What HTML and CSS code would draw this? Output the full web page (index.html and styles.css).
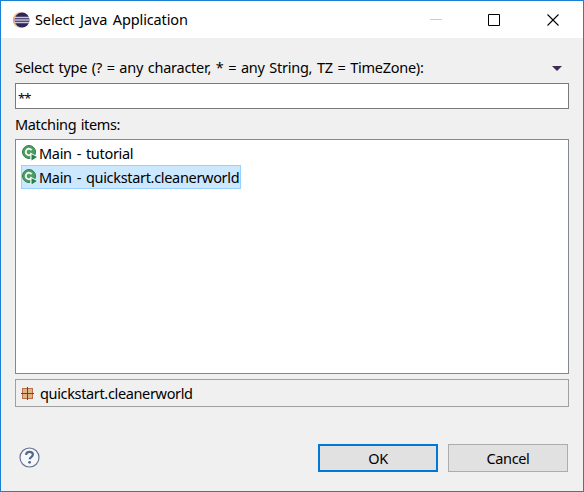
FILE: index.html
```html
<!DOCTYPE html>
<html lang="en">
<head>
<meta charset="utf-8">
<title>Select Java Application</title>
<link rel="stylesheet" href="styles.css">
</head>
<body>
<div class="window">
  <header class="titlebar">
    <svg class="app-icon" width="18" height="18" viewBox="0 0 18 18">
      <circle cx="8.6" cy="9" r="7.8" fill="#f7a145"/>
      <circle cx="9.8" cy="9" r="7.900" fill="#e9e2e6"/>
      <circle cx="10" cy="9" r="7.500" fill="#2f2556"/>
      <path d="M3 6.500h14M2.500 9h15M3 11.500h14" stroke="#c9c6dc" stroke-width="1.300"/>
    </svg>
    <h1 class="title">Select Java Application</h1>
    <svg class="controls" width="132" height="14" viewBox="0 0 132 14" fill="none">
      <path d="M0 6.500h12" stroke="#ccc"/>
      <path d="M58.500 1.500h11v11h-11z" stroke="#000"/>
      <path d="M117.500 1.500l11 11M128.500 1.500l-11 11" stroke="#000" stroke-width="1.100"/>
    </svg>
  </header>
  <main class="content">
    <div class="prompt">
      <label class="prompt-text">Select type (? = any character, * = any String, TZ = TimeZone):</label>
      <svg width="10" height="5" viewBox="0 0 10 5"><path d="M0 0h10L5 5z" fill="#3c2c55"/></svg>
    </div>
    <div class="filter">**</div>
    <div class="matching">Matching items:</div>
    <ul class="list">
      <li class="item">
        <svg class="class-icon" width="16" height="16" viewBox="0 0 16 16">
          <circle cx="7" cy="7" r="6.500" fill="#4c9c68" stroke="#2f7d4d"/>
          <path d="M9.600 5.200A3.200 3.200 0 1 0 9.600 8.800" fill="none" stroke="#f4fae8" stroke-width="1.900"/>
          <path d="M8.300 7.500l7.700 4.500-7.700 4.500z" fill="#fff"/>
          <path d="M9.500 9.200l5.500 2.900-5.500 3.300z" fill="#268052"/>
        </svg>
        <span>Main - tutorial</span>
      </li>
      <li class="item selected">
        <svg class="class-icon" width="16" height="16" viewBox="0 0 16 16">
          <circle cx="7" cy="7" r="6.500" fill="#4c9c68" stroke="#2f7d4d"/>
          <path d="M9.600 5.200A3.200 3.200 0 1 0 9.600 8.800" fill="none" stroke="#f4fae8" stroke-width="1.900"/>
          <path d="M8.300 7.500l7.700 4.500-7.700 4.500z" fill="#fff"/>
          <path d="M9.500 9.200l5.500 2.900-5.500 3.300z" fill="#268052"/>
        </svg>
        <span>Main - quickstart.cleanerworld</span>
      </li>
    </ul>
    <div class="status">
      <svg width="13" height="13" viewBox="0 0 13 13">
        <path d="M1 1h11v11H1z" fill="#b96f4c"/>
        <path d="M2 2h4v4H2zM7 2h4v4H7zM2 7h4v4H2zM7 7h4v4H7z" fill="#dfb583"/>
        <path d="M6.500 0v13M0 6.500h13" stroke="#70402e"/>
      </svg>
      <span class="package">quickstart.cleanerworld</span>
    </div>
    <footer class="footer">
      <svg class="help" width="21" height="21" viewBox="0 0 21 21" fill="none">
        <circle cx="10.500" cy="10.500" r="9.500" fill="#f6f7f9" stroke="#65758f" stroke-width="1.200"/>
        <path d="M7 7.800C7.200 5.700 8.600 4.800 10.500 4.800c2.100 0 3.400 1.100 3.400 2.800 0 2.500-3.200 2.400-3.200 4.700" stroke="#52678a" stroke-width="2.200"/>
        <circle cx="10.600" cy="15.300" r="1.400" fill="#52678a"/>
      </svg>
      <button class="button ok">OK</button>
      <button class="button cancel">Cancel</button>
    </footer>
  </main>
</div>
</body>
</html>
```
FILE: styles.css
```css
* { box-sizing: border-box; }
body { margin: 0; }
.window {
  width: 584px; height: 492px;
  border: 1px solid #1a80d4;
  background: #f0f0f0; color: #000;
  font: 14.5px/20px "Noto Sans", "Open Sans", sans-serif;
  white-space: nowrap;
}
svg { display: block; flex: none; }
.titlebar { display: flex; align-items: center; height: 37px; padding: 0 21px 0 11px; background: #fff; }
.title { margin: 0 0 2px 5px; font: inherit; letter-spacing: -0.13px; word-spacing: 2px; }
.controls { margin-left: auto; }
.content { padding: 0 14px; }
.prompt { display: flex; align-items: center; justify-content: space-between; height: 45px; padding: 15px 7px 0 0; }
.prompt-text { margin-bottom: 2px; letter-spacing: -0.26px; word-spacing: 1.2px; }
.filter { height: 26px; padding: 5px 2px; border: 1px solid #7a7a7a; background: #fff; font-size: 13px; line-height: 18px; letter-spacing: -1px; }
.matching { height: 30px; padding-top: 5px; letter-spacing: -0.35px; word-spacing: 1px; }
.list { height: 235px; margin: 0; padding: 1px 5px; border: 1px solid #828790; background: #fff; list-style: none; }
.item { display: flex; align-items: center; width: 220px; height: 24px; border: 1px solid transparent; }
.item span { margin-left: 1px; letter-spacing: -0.32px; word-spacing: 1.5px; }
.selected { background: #cce8ff; border-color: #99d1ff; }
.status { display: flex; align-items: center; height: 28px; margin-top: 5px; padding-left: 5px; border: 1px solid #a0a0a0; }
.package { margin-left: 6px; letter-spacing: -0.35px; }
.footer { display: flex; align-items: center; margin-top: 37px; padding-left: 4px; }
.help { margin-bottom: 2px; }
.button { width: 120px; height: 28px; padding: 0; border: 1px solid #adadad; background: #e1e1e1; color: #000; font: inherit; letter-spacing: -0.35px; }
.ok { margin-left: 278px; border: 2px solid #0078d7; }
.cancel { margin-left: 10px; }
```
